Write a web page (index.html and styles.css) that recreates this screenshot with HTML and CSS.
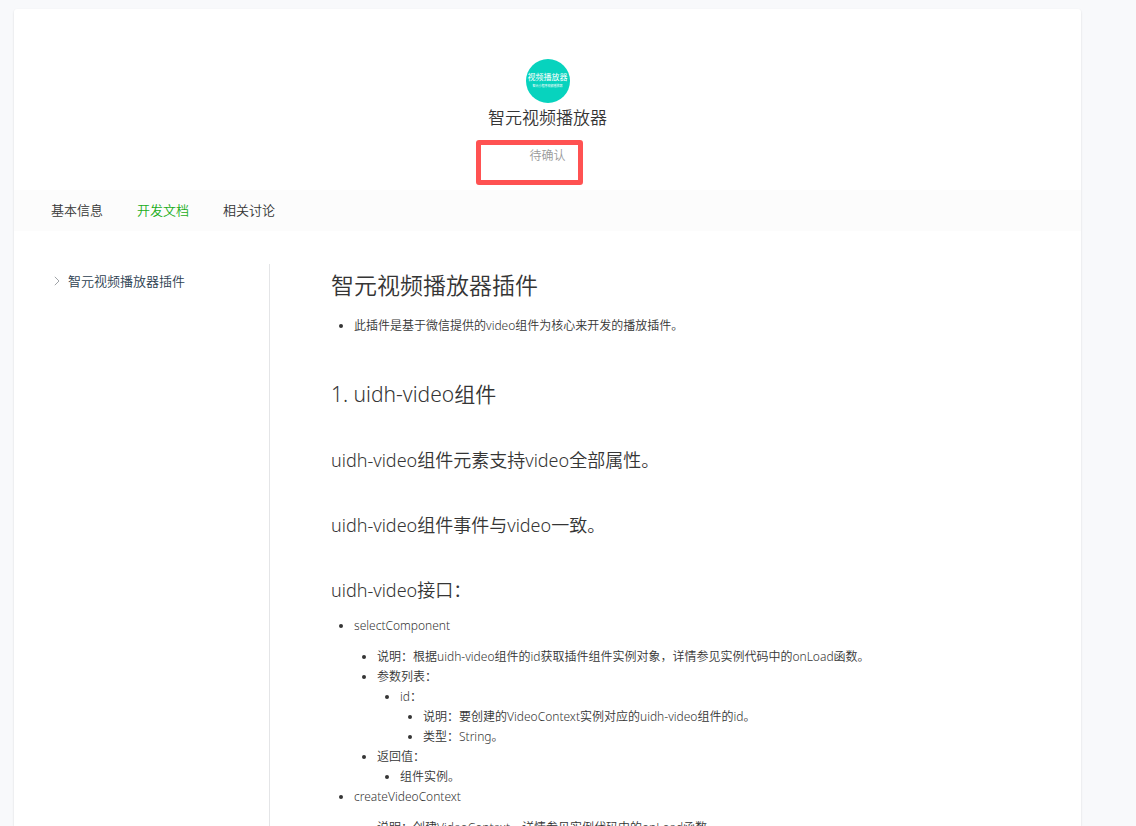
FILE: index.html
```
<!DOCTYPE html>
<html lang="zh-CN">
<head>
  <meta charset="UTF-8" />
  <meta name="viewport" content="width=device-width, initial-scale=1.0"/>
  <title>智元视频播放器</title>
  <link rel="stylesheet" href="styles.css">
</head>
<body>
  <div class="card">
    <header class="plugin-header">
      <div class="logo">
        <span class="logo-name">视频播放器</span>
        <span class="logo-sub">智元小程序视频播放器</span>
      </div>
      <div class="plugin-name">智元视频播放器</div>
      <div class="status">待确认<span class="mark"></span></div>
    </header>

    <nav class="tabs">
      <a href="#info">基本信息</a>
      <a href="#doc" class="active">开发文档</a>
      <a href="#talk">相关讨论</a>
    </nav>

    <div class="content">
      <aside class="sidebar">
        <a href="#top">
          <svg class="arrow" width="6" height="10" viewBox="0 0 6 10" fill="none" stroke="#a0a4a8"><path d="M0.8 0.8L5 5L0.8 9.2"/></svg>
          智元视频播放器插件
        </a>
      </aside>

      <main class="doc" id="doc">
        <h1 id="top">智元视频播放器插件</h1>
        <ul>
          <li>此插件是基于微信提供的video组件为核心来开发的播放插件。</li>
        </ul>
        <h2>1. uidh-video组件</h2>
        <h3>uidh-video组件元素支持video全部属性。</h3>
        <h3>uidh-video组件事件与video一致。</h3>
        <h3>uidh-video接口：</h3>
        <ul>
          <li>
            <p>selectComponent</p>
            <ul>
              <li>说明：根据uidh-video组件的id获取插件组件实例对象，详情参见实例代码中的onLoad函数。</li>
              <li>参数列表：
                <ul>
                  <li>id：
                    <ul>
                      <li>说明：要创建的VideoContext实例对应的uidh-video组件的id。</li>
                      <li>类型：String。</li>
                    </ul>
                  </li>
                </ul>
              </li>
              <li>返回值：
                <ul>
                  <li>组件实例。</li>
                </ul>
              </li>
            </ul>
          </li>
          <li>
            <p>createVideoContext</p>
            <ul>
              <li>说明：创建VideoContext，详情参见实例代码中的onLoad函数。</li>
            </ul>
          </li>
        </ul>
      </main>
    </div>
  </div>
</body>
</html>
```
FILE: styles.css
```
* {
  box-sizing: border-box;
}
html {
  height: 100%;
}
body {
  display: flex;
  height: 100%;
  margin: 0;
  padding: 9px 55px 0 14px;
  overflow: hidden;
  background: #f8f9fb;
  color: #353535;
  font-family: "Noto Sans", "Noto Sans CJK SC", sans-serif;
  font-weight: 350;
  font-size: 12px;
  line-height: 20px;
}
a {
  color: inherit;
  text-decoration: none;
}
.card {
  flex: 1;
  background: #fff;
  border-radius: 3px 3px 0 0;
  box-shadow: 0 1px 2px rgba(0, 0, 0, 0.15);
  overflow: hidden;
}
.plugin-header {
  display: flex;
  flex-direction: column;
  align-items: center;
  height: 181px;
  padding-top: 50px;
}
.logo {
  display: flex;
  flex-direction: column;
  align-items: center;
  width: 44px;
  height: 44px;
  padding-top: 12px;
  border-radius: 50%;
  background: #07d3be;
  color: #fff;
  font-weight: 400;
  white-space: nowrap;
}
.logo-name {
  font-size: 8px;
  line-height: 12px;
}
.logo-sub {
  font-size: 3px;
  line-height: 7px;
}
.plugin-name {
  margin-top: 2px;
  font-size: 17px;
  line-height: 26px;
}
.status {
  position: relative;
  margin-top: 15px;
  color: #9a9a9a;
}
.mark {
  position: absolute;
  top: -6px;
  left: -53px;
  width: 107px;
  height: 45px;
  border: 5px solid #ff5252;
  border-radius: 3px;
}
.tabs {
  display: flex;
  gap: 34px;
  padding: 0 37px;
  background: #fcfcfc;
  font-size: 13px;
  line-height: 41px;
}
.tabs .active {
  color: #1aad19;
}
.content {
  display: flex;
  padding: 33px 40px 0;
}
.sidebar {
  width: 216px;
  min-height: 600px;
  padding-top: 7px;
  border-right: 1px solid #e4e5e7;
  color: #2c3e50;
  font-size: 13px;
}
.sidebar a {
  display: flex;
  align-items: center;
  gap: 8px;
}
.doc {
  flex: 1;
  padding-left: 61px;
}
h1, h2, h3 {
  margin: 0;
  font-weight: 350;
}
h1 {
  font-size: 23px;
  line-height: 42px;
}
h2 {
  margin-top: 40px;
  font-size: 21px;
  line-height: 36px;
}
h3 {
  margin-top: 33px;
  font-size: 18px;
  line-height: 32px;
}
h2 + h3 {
  margin-top: 32px;
}
ul {
  margin: 0;
  padding-left: 23px;
  list-style: disc;
}
h1 + ul, h3 + ul {
  margin-top: 10px;
}
p {
  margin: 0 0 11px;
}
```
